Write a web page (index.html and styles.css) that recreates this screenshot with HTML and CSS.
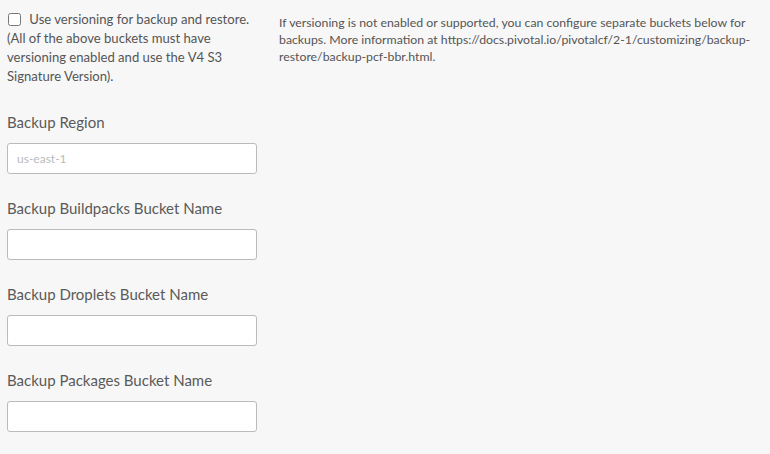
FILE: index.html
```html
<!DOCTYPE html>
<html>
<head>
<meta charset="utf-8">
<link rel="stylesheet" href="styles.css">
</head>
<body>
<div class="page">
  <div class="left">
    <div class="check">
      <label class="check-label"><input type="checkbox" class="cb"> Use versioning for backup and restore. (All of the above buckets must have versioning enabled and use the V4 S3 Signature Version).</label>
    </div>
    <div class="field">
      <div class="label">Backup Region</div>
      <input class="text" type="text" placeholder="us-east-1">
    </div>
    <div class="field">
      <div class="label">Backup Buildpacks Bucket Name</div>
      <input class="text" type="text">
    </div>
    <div class="field">
      <div class="label">Backup Droplets Bucket Name</div>
      <input class="text" type="text">
    </div>
    <div class="field">
      <div class="label">Backup Packages Bucket Name</div>
      <input class="text" type="text">
    </div>
  </div>
  <div class="right">
    <p class="help">If versioning is not enabled or supported, you can configure separate buckets below for backups. More information at https://docs.pivotal.io/pivotalcf/2-1/customizing/backup-restore/backup-pcf-bbr.html.</p>
  </div>
</div>
</body>
</html>
```
FILE: styles.css
```css
html, body {
  margin: 0;
  padding: 0;
  background: #f7f7f7;
}
body {
  font-family: Lato, "Open Sans", sans-serif;
  color: #555;
  width: 770px;
  height: 454px;
  overflow: hidden;
}
.page {
  display: flex;
  padding: 10px 0 0 7px;
  gap: 22px;
}
.left {
  width: 250px;
  flex: none;
}
.check-label {
  display: block;
  font-size: 13.1px;
  line-height: 19px;
  color: #555;
}
.cb {
  width: 13px;
  height: 13px;
  margin: 0 5px 0 1px;
  vertical-align: -2px;
}
.check + .field {
  margin-top: 26px;
}
.field + .field {
  margin-top: 24px;
}
.label {
  font-size: 15px;
  line-height: 20px;
  color: #5a5a5a;
  margin-bottom: 11px;
}
.text {
  display: block;
  box-sizing: border-box;
  width: 250px;
  height: 31px;
  border: 1px solid #bbb;
  border-radius: 3px;
  background: #fff;
  padding: 0 9px;
  font-family: Lato, sans-serif;
  font-size: 12px;
  color: #555;
  margin: 0;
}
.text::placeholder {
  color: #bbb;
}
.right {
  width: 490px;
}
.help {
  margin: 4px 0 0 0;
  font-size: 12.3px;
  line-height: 17px;
  color: #555;
}
```
